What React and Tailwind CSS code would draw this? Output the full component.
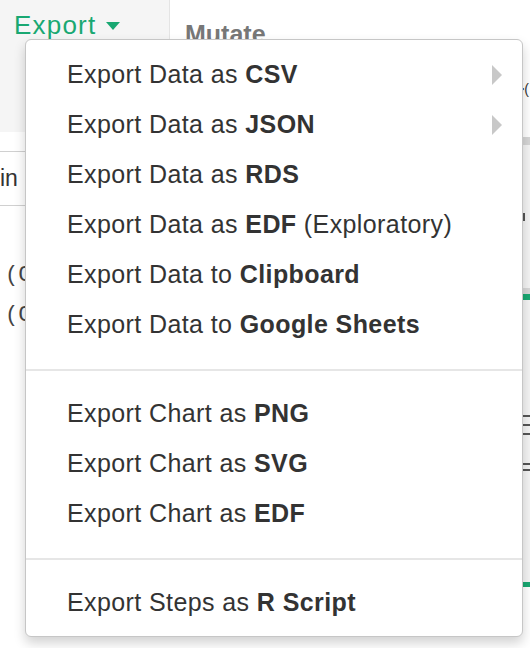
import React from "react";

const groups = [
  [
    { pre: "Export Data as ", bold: "CSV", sub: true },
    { pre: "Export Data as ", bold: "JSON", sub: true },
    { pre: "Export Data as ", bold: "RDS" },
    { pre: "Export Data as ", bold: "EDF", post: " (Exploratory)" },
    { pre: "Export Data to ", bold: "Clipboard" },
    { pre: "Export Data to ", bold: "Google Sheets" },
  ],
  [
    { pre: "Export Chart as ", bold: "PNG" },
    { pre: "Export Chart as ", bold: "SVG" },
    { pre: "Export Chart as ", bold: "EDF" },
  ],
  [{ pre: "Export Steps as ", bold: "R Script" }],
];

function MenuItem({ item }) {
  return (
    <div className="flex h-[50px] items-center justify-between pl-[41px] pr-[20px] text-[#333]">
      <span className="whitespace-nowrap tracking-[0.4px]">
        {item.pre}
        <b className="font-bold">{item.bold}</b>
        {item.post}
      </span>
      {item.sub && (
        <svg width="10" height="20" viewBox="0 0 10 20">
          <path d="M0 0 L10 10 L0 20 Z" fill="#c8c8c8" />
        </svg>
      )}
    </div>
  );
}

export default function App() {
  return (
    <div
      className="relative flex h-[648px] w-[530px] overflow-hidden bg-white"
      style={{ fontFamily: "'Liberation Sans', Arial, sans-serif" }}
    >
      {/* left column */}
      <div className="flex w-[170px] shrink-0 flex-col">
        <div className="h-[132px] border-r border-[#e4e4e4] bg-[#f5f5f5] pl-[14px] pt-[6px]">
          <button className="flex items-center gap-[10px] text-[26px] tracking-[1.2px] text-[#19a872]">
            Export
            <svg width="14" height="8" viewBox="0 0 14 8">
              <path d="M0 0 L14 0 L7 8 Z" fill="#19a872" />
            </svg>
          </button>
        </div>
        <div className="mt-[19px] flex h-[55px] items-center border-y border-[#d0d0d0] text-[23px] text-[#333]">
          in
        </div>
        <div
          className="mt-[57px] flex flex-col gap-[14px] pl-[5px] text-[22px] leading-[26px] text-[#444]"
          style={{ fontFamily: "'Liberation Mono', monospace" }}
        >
          <div>(C</div>
          <div>(C</div>
        </div>
      </div>

      {/* right panel, mostly hidden behind menu */}
      <div className="flex flex-1 flex-col">
        <div className="h-[60px] pl-[15px] pt-[16px] text-[25px] font-bold text-[#777]">
          Mutate
        </div>
        <div className="flex h-[40px] items-end justify-end pr-[1px] text-[14px] text-[#333]">
          &gt;(
        </div>
        <div className="mt-[37px] h-[8px] bg-[#d6d6d6]" />
        <div className="flex h-[143px] flex-col items-end justify-center bg-[#f4f4f4]">
          <div className="mr-[5px] h-[8px] w-[2px] bg-[#555]" />
        </div>
        <div className="h-[6px] bg-[#d8d8d8]" />
        <div className="h-[6px] bg-[#19a872]" />
        <div className="flex h-[282px] flex-col items-end bg-[#f4f4f4] pt-[115px]">
          <div className="h-[2px] w-[8px] bg-[#555]" />
          <div className="mt-[7px] h-[2px] w-[8px] bg-[#555]" />
          <div className="mt-[7px] h-[2px] w-[8px] bg-[#555]" />
          <div className="mt-[28px] h-[2px] w-[8px] bg-[#555]" />
          <div className="mt-[4px] h-[2px] w-[8px] bg-[#555]" />
        </div>
        <div className="h-[5px] bg-[#19a872]" />
      </div>

      {/* dropdown menu */}
      <div className="absolute left-[25px] top-[39px] w-[498px] rounded-[6px] border border-[#c6c6c6] bg-white pt-[10px] pb-[8px] text-[25px] shadow-[0_6px_12px_rgba(0,0,0,0.18)]">
        {groups.map((g, gi) => (
          <div key={gi}>
            {gi > 0 && <div className="mb-[18px] mt-[19px] h-[2px] bg-[#e6e6e6]" />}
            {g.map((item, i) => (
              <MenuItem key={i} item={item} />
            ))}
          </div>
        ))}
      </div>
    </div>
  );
}
